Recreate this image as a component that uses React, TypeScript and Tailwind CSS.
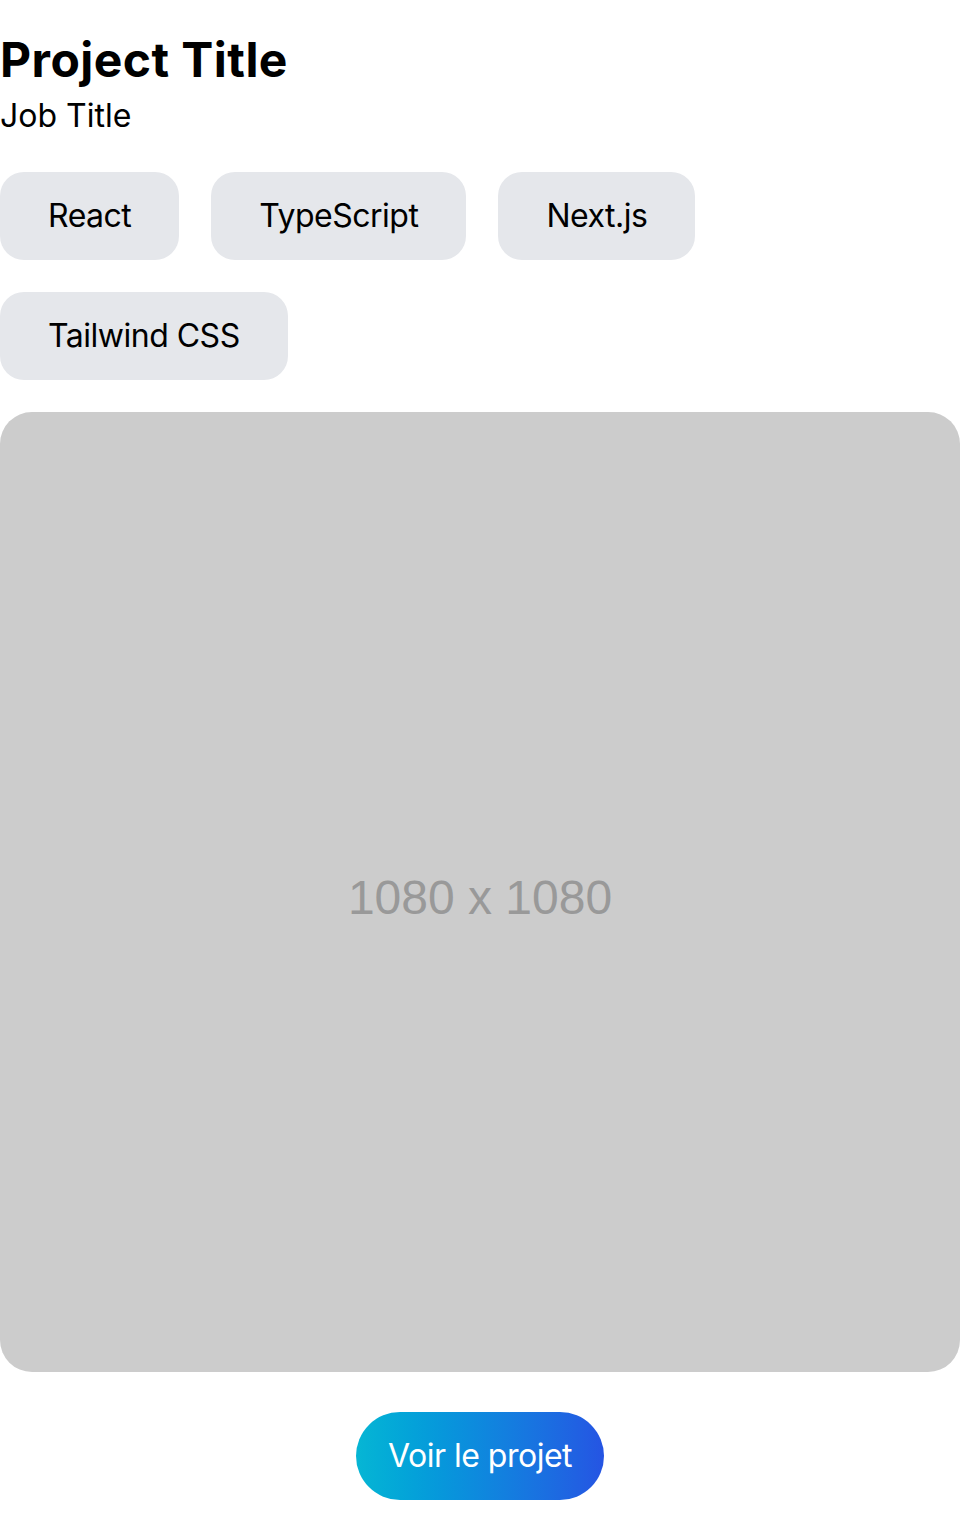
export default function App() {
  const tags = ["React", "TypeScript", "Next.js", "Tailwind CSS"];
  return (
    <div className="bg-white text-black" style={{ fontFamily: "Inter, 'Noto Sans', sans-serif" }}>
      <div className="pt-[24px] pb-[32px]">
        <h1 className="text-[48px] font-bold leading-[72px] tracking-[0.45px]">Project Title</h1>
        <p className="text-[32px] leading-[48px] -mt-[4px]">Job Title</p>
      </div>
      <div className="flex flex-wrap gap-8 w-[720px]">
        {tags.map((t) => (
          <span key={t} className="bg-[#e5e7eb] rounded-[24px] px-12 py-5 text-[32px] leading-[48px] tracking-[-0.5px]">
            {t}
          </span>
        ))}
      </div>
      <div className="mt-8 h-[960px] rounded-[32px] bg-[#cccccc] flex items-center justify-center">
        <span className="pt-3 text-[48px] text-[#999999]" style={{ fontFamily: "'Liberation Sans', Arial, sans-serif" }}>
          1080 x 1080
        </span>
      </div>
      <div className="mt-10 pb-8 flex justify-center">
        <button className="h-[88px] w-[248px] rounded-full text-white text-[32px] tracking-[-0.5px] bg-gradient-to-r from-[#06b6d4] to-[#2554e3]">
          Voir le projet
        </button>
      </div>
    </div>
  );
}
